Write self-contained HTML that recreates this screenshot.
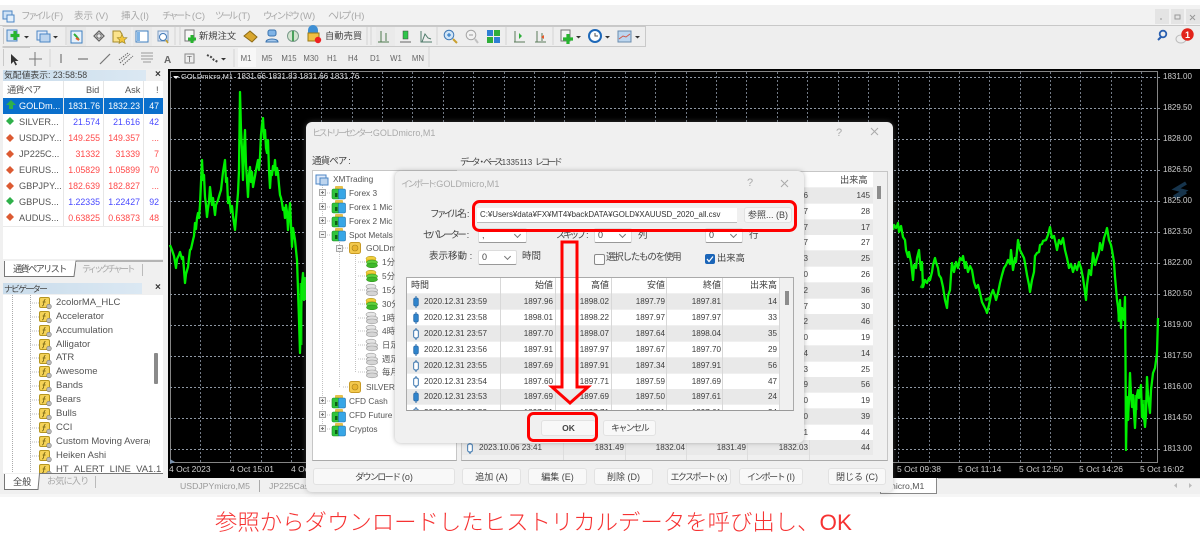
<!DOCTYPE html>
<html lang="ja"><head><meta charset="utf-8"><title>History Center</title>
<style>
html,body{margin:0;padding:0;background:#fff}
#root{position:relative;width:1200px;height:538px;overflow:hidden;background:#fff;font-family:"Liberation Sans","Noto Sans CJK JP",sans-serif;filter:blur(.35px);color:#444}
.a,.t,.btn,.cb{position:absolute}
.t{white-space:nowrap;line-height:12px;font-size:9px}
.k{letter-spacing:-.28em}.k1{letter-spacing:-.18em}
svg{position:absolute;left:0;top:0;overflow:visible}
.btn{background:#f8f8f8;border:1px solid #e2e2e2;border-radius:3px;box-sizing:border-box;text-align:center;font-size:9px;color:#444;line-height:16px;white-space:nowrap}
.cb{background:#fff;border:1px solid #dcdcdc;border-bottom:1px solid #999;box-sizing:border-box;font-size:9px;line-height:13px;padding-left:3px;border-radius:2px}
.cb:after{content:"";position:absolute;right:6px;top:3px;width:4px;height:4px;border-right:1px solid #777;border-bottom:1px solid #777;transform:rotate(45deg)}
.ax{left:1163px;font-size:8px;color:#cfcfcf}
.tm{top:463px;font-size:8.500px;color:#cfcfcf}
.mw{position:absolute;left:3px;width:160px;height:16px;border-bottom:1px solid #eaeaea;background:#fff;font-size:8.800px;line-height:16px}
.mw i{position:absolute;font-style:normal;top:0;text-align:right}
.mw i:nth-child(1){left:16px;color:#555;text-align:left;font-size:9.200px}
.mw i:nth-child(2){right:63px}.mw i:nth-child(3){right:23px}.mw i:nth-child(4){right:4px}
.bl i:nth-child(n+2){color:#4a4aff}.rd i:nth-child(n+2){color:#ff4a4a}
.sel{background:#0a6fcc!important}.sel i{color:#fff!important}
.nv{position:absolute;left:53px;font-size:9.500px;line-height:12px;white-space:nowrap;color:#555}
.row{position:absolute;height:15px;font-size:8.100px;line-height:15px;color:#3c3c3c}
.g{background:#e9e9e9}
.row span{position:absolute;top:0;white-space:nowrap}
#d2t .row{left:0;width:373px}
#d2t .row span:nth-child(1){left:17px}
#d2t .row span:nth-child(2){right:227px}#d2t .row span:nth-child(3){right:171px}#d2t .row span:nth-child(4){right:115px}#d2t .row span:nth-child(5){right:59px}#d2t .row span:nth-child(6){right:3px}
#d1t .row{left:0;width:411px}
#d1t .row span:nth-child(1){left:17px}
#d1t .row span:nth-child(2){right:249px}#d1t .row span:nth-child(3){right:188px}#d1t .row span:nth-child(4){right:127px}#d1t .row span:nth-child(5){right:65px}#d1t .row span:nth-child(6){right:3px}
.tr{font-size:8.300px;color:#555}
</style></head><body><div id="root">

<!-- window chrome -->
<div class="a" style="left:0;top:5px;width:1200px;height:20px;background:#f2f2f2"></div>
<div class="a" style="left:0;top:25px;width:1200px;height:44px;background:#eeeeee;border-top:1px solid #c8c8c8;box-sizing:border-box"></div>
<div class="a" style="left:1155px;top:9px;width:14px;height:15px;background:#e4e4e4"></div>
<div class="a" style="left:1171px;top:9px;width:13px;height:15px;background:#e4e4e4"></div>
<div class="a" style="left:1186px;top:9px;width:14px;height:15px;background:#e4e4e4"></div>
<div class="a" style="left:0;top:69px;width:168px;height:425px;background:#f0f0f0"></div>
<div class="a" style="left:168px;top:478px;width:1032px;height:16px;background:#f0f0f0"></div>
<div class="a" style="left:0;top:494px;width:1200px;height:3px;background:#f6f6f6"></div>

<div class="t" style="left:21px;top:11px;color:#a8a8a8;font-size:9.500px"><span class="k">ファイル</span> (F)</div>
<div class="t" style="left:74px;top:11px;color:#a8a8a8;font-size:9.500px">表示 (V)</div>
<div class="t" style="left:121px;top:11px;color:#a8a8a8;font-size:9.500px">挿入(I)</div>
<div class="t" style="left:162px;top:11px;color:#a8a8a8;font-size:9.500px"><span class="k">チャート</span> (C)</div>
<div class="t" style="left:215px;top:11px;color:#a8a8a8;font-size:9.500px"><span class="k">ツール</span> (T)</div>
<div class="t" style="left:263px;top:11px;color:#a8a8a8;font-size:9.500px"><span class="k">ウィンドウ</span> (W)</div>
<div class="t" style="left:328px;top:11px;color:#a8a8a8;font-size:9.500px"><span class="k">ヘルプ</span> (H)</div>

<!-- toolbars -->
<svg width="1200" height="70" viewBox="0 0 1200 70">
<defs>
<symbol id="fold" viewBox="0 0 14 13" overflow="visible"><rect x="3" y="0" width="8" height="4" rx="1" fill="#e6c04a"/><rect x="0" y="3" width="8" height="10" rx="1.5" fill="#2fc43c" stroke="#1a8a25" stroke-width=".6"/><rect x="6.5" y="3" width="7" height="10" rx="1.5" fill="#37a6e6" stroke="#1d6fa8" stroke-width=".6"/><rect x="3" y="7" width="2.5" height="4" fill="#0b5e14"/></symbol>
<symbol id="coin" viewBox="0 0 12 12" overflow="visible"><rect x=".5" y=".5" width="11" height="11" rx="2" fill="#f3c94e" stroke="#c89a24"/><circle cx="6" cy="6" r="3" fill="#e9b52f" stroke="#a8801a" stroke-width=".6"/></symbol>
<symbol id="dbg" viewBox="0 0 12 12" overflow="visible"><ellipse cx="5" cy="2.6" rx="5" ry="2.4" fill="#f2cf3a" stroke="#9c8a20" stroke-width=".5"/><rect y="3" width="10" height="3" fill="#e3bd2e"/><ellipse cx="6" cy="6.4" rx="5.6" ry="2.4" fill="#5fd13c" stroke="#2e8a1a" stroke-width=".5"/><ellipse cx="6" cy="9.4" rx="5.6" ry="2.4" fill="#3db82a" stroke="#2e8a1a" stroke-width=".5"/></symbol>
<symbol id="dbn" viewBox="0 0 12 12" overflow="visible"><ellipse cx="5" cy="2.6" rx="5" ry="2.4" fill="#e6e6e6" stroke="#9a9a9a" stroke-width=".6"/><ellipse cx="6" cy="6.4" rx="5.6" ry="2.4" fill="#dedede" stroke="#9a9a9a" stroke-width=".6"/><ellipse cx="6" cy="9.4" rx="5.6" ry="2.4" fill="#d5d5d5" stroke="#9a9a9a" stroke-width=".6"/></symbol>
<symbol id="cf" viewBox="0 0 6 12" overflow="visible"><path d="M3 0V12" stroke="#2a6aa8"/><rect x=".7" y="2" width="4.6" height="8" rx="1.6" fill="#2f84cc" stroke="#2a6aa8" stroke-width=".8"/></symbol>
<symbol id="ch" viewBox="0 0 6 12" overflow="visible"><path d="M3 0V12" stroke="#2a6aa8"/><rect x=".7" y="2" width="4.6" height="8" rx="1.6" fill="#fff" stroke="#2a6aa8" stroke-width=".9"/></symbol>
<symbol id="fx" viewBox="0 0 13 12" overflow="visible"><rect x=".5" y=".5" width="10" height="10" rx="1.5" fill="#f4d257" stroke="#b5951f"/><path d="M6.500 2.500C5 2.500 5 4 4.800 6S4.200 9 3 9M3.600 5H6.600" stroke="#6a5a10" fill="none" stroke-width=".8"/><circle cx="10" cy="9.500" r="2.300" fill="#bbb" stroke="#777" stroke-width=".6"/></symbol>
</defs>
<g fill="none" stroke="#c9c9c9">
<path d="M2.500 26.500H645.500V46.500H2.500M2.500 47.500H30M3.500 28V44M3.500 49V66"/>
<path d="M66 27V45M180 27V45M175 27V45M367 27V45M371 27V45M437 27V45M506 27V45M553 27V45M50 49V67M234 49V67M429 47V67" stroke="#d4d4d4"/>
</g>
<!-- menu logo -->
<rect x="3" y="11" width="9" height="8" fill="#cfe2f5" stroke="#4c86c4"/><rect x="7" y="15" width="7" height="7" fill="#e4f0fb" stroke="#4c86c4"/>
<!-- toolbar 1 icons -->
<rect x="7" y="30" width="10" height="11" fill="#cfe2f5" stroke="#4c86c4"/><path d="M15 31v9M10.500 35.500h9" stroke="#27b52f" stroke-width="3.200"/><path d="M24 36h5l-2.500 2.500z" fill="#333"/>
<rect x="37" y="31" width="10" height="9" fill="#dfeafa" stroke="#4c86c4"/><rect x="40" y="34" width="10" height="8" fill="#bcd4ee" stroke="#4c86c4"/><path d="M53 36h5l-2.500 2.500z" fill="#333"/>
<rect x="67" y="27" width="19" height="19" fill="#e2e2e2" opacity=".5"/><rect x="71" y="31" width="11" height="12" fill="#e8f2fb" stroke="#3e7fc0"/><path d="M74 34l3 3M77 37l2 3" stroke="#2fae3a" stroke-width="2"/><path d="M76 38l3 2" stroke="#e85a2a" stroke-width="2"/>
<path d="M99 31l5 5-5 5-5-5z" fill="none" stroke="#666" stroke-width="1.300"/><circle cx="99" cy="36" r="2.200" fill="none" stroke="#666"/>
<rect x="110" y="27" width="21" height="19" fill="#e4e4e4" opacity=".5"/><path d="M113 31h7l2 3v8h-9z" fill="#fbe38b" stroke="#a58a2c"/><path d="M122 34l1.500 3.500 3.500.3-2.700 2.300.9 3.400-3.200-1.900-3 1.900.8-3.400-2.600-2.300 3.500-.3z" fill="#f2c53a" stroke="#96801e" stroke-width=".6"/>
<rect x="133" y="27" width="19" height="19" fill="#e4e4e4" opacity=".5"/><rect x="136" y="31" width="12" height="11" fill="#fff" stroke="#3e7fc0"/><rect x="137" y="32" width="3" height="9" fill="#7fb4e6"/>
<rect x="158" y="31" width="10" height="10" fill="#dfeafa" stroke="#7c9cc0"/><circle cx="163" cy="37" r="3.500" fill="#fff" stroke="#3f78b5"/><path d="M166 40l2 3" stroke="#c5a032" stroke-width="1.600"/>
<rect x="185" y="30" width="9" height="11" fill="#f7f7f7" stroke="#777"/><path d="M192 35v8M188 39h8" stroke="#27b52f" stroke-width="3"/>
<text x="199" y="39" font-size="9.300" fill="#444">新規注文</text>
<path d="M244 36l6-5 7 6-5 5z" fill="#d9a72f" stroke="#8c6a14"/>
<rect x="268" y="30" width="8" height="6" rx="2" fill="#7fb3e6" stroke="#3a73ae"/><path d="M266 42c0-4 12-4 12 0z" fill="#a5c8ec" stroke="#3a73ae"/>
<circle cx="293" cy="36" r="5.500" fill="#d4e4d0" stroke="#7a9a8a"/><path d="M293 31v10" stroke="#49a05a" stroke-width="2"/>
<path d="M308 30a5 5 0 0 1 10 0v5h-10z" fill="#3e8fd4"/><path d="M308 33h11v8h-11z" fill="#f0c044" stroke="#9a7a14"/><circle cx="318" cy="40" r="3.200" fill="#e22"/>
<text x="325" y="39" font-size="9.300" fill="#444">自動売買</text>
<rect x="376" y="27" width="19" height="19" fill="#e4e4e4" opacity=".4"/>
<path d="M381 31v11M386 33v8M378 42h11" stroke="#4d7a4d" fill="none"/>
<rect x="403" y="31" width="5" height="8" fill="#2fc44a" stroke="#444" stroke-width=".5"/><path d="M400 42h11" stroke="#666"/>
<path d="M422 42l3-8 3 4 3 1M421 31v11h11" fill="none" stroke="#4f7a6a"/>
<circle cx="449" cy="35" r="4.800" fill="#cfe4f7" stroke="#3f78b5"/><path d="M447 35h4M449 33v4" stroke="#1e6fc2"/><path d="M453 39l4 4" stroke="#c9a030" stroke-width="2"/>
<circle cx="471" cy="35" r="4.800" fill="#f2f2f2" stroke="#a5a5a5"/><path d="M469 35h4" stroke="#999"/><path d="M475 39l3 4" stroke="#c2c2c2" stroke-width="2"/>
<rect x="487" y="30" width="6" height="6" fill="#2f7fd4"/><rect x="494" y="30" width="6" height="6" fill="#2fae3a"/><rect x="487" y="37" width="6" height="6" fill="#2fae3a"/><rect x="494" y="37" width="6" height="6" fill="#2f7fd4"/>
<path d="M515 31v11M514 42h11" stroke="#5a7a5a" fill="none"/><path d="M519 33l3 3-3 3z" fill="#2fae3a"/>
<path d="M537 31v11M535 42h11M542 33v8" stroke="#5a7a5a" fill="none"/><path d="M544 35l-3 2 3 2z" fill="#e85a2a"/>
<rect x="561" y="30" width="9" height="11" fill="#f3f3f3" stroke="#777"/><path d="M568 34v10M563 39h10" stroke="#27b52f" stroke-width="3.200"/><path d="M576 36h5l-2.500 2.500z" fill="#333"/>
<circle cx="595" cy="36" r="6" fill="#fff" stroke="#1e68b8" stroke-width="2"/><path d="M595 33v3h3" stroke="#555" fill="none"/><path d="M605 36h5l-2.500 2.500z" fill="#333"/>
<rect x="618" y="31" width="13" height="11" fill="#bcd6ef" stroke="#6a8cae"/><path d="M619 39l4-3 3 1 4-3" stroke="#d05a4a" fill="none"/><path d="M635 36h5l-2.500 2.500z" fill="#333"/>
<!-- right -->
<path d="M1160 19h2" stroke="#999"/><rect x="1175" y="15" width="5" height="4" fill="none" stroke="#999"/><path d="M1190 15l5 5m0-5l-5 5" stroke="#999"/>
<circle cx="1163" cy="34" r="3.300" fill="none" stroke="#2a5fb0" stroke-width="1.800"/><path d="M1161 37l-3 3" stroke="#2a5fb0" stroke-width="2"/>
<ellipse cx="1181" cy="39" rx="5" ry="4" fill="#eee" stroke="#bbb"/><circle cx="1187.500" cy="34.500" r="6.200" fill="#e2231a"/><text x="1187.500" y="38" font-size="9" font-weight="bold" fill="#fff" text-anchor="middle">1</text>
<!-- toolbar 2 -->
<path d="M11 54v10l2.500-2.500 2 4 1.500-1-2-3.500h3.500z" fill="#333"/>
<path d="M35 52v14M29 59h13" stroke="#777" fill="none"/>
<path d="M61 54v9" stroke="#777" stroke-width="1.200"/><path d="M78 59h10" stroke="#777" stroke-width="1.200"/><path d="M100 64l10-10" stroke="#777" stroke-width="1.200"/>
<path d="M120 63l10-9M123 65l10-9M119 60l9-7" stroke="#666" stroke-dasharray="1.500 1"/>
<path d="M141 53h12M141 56h12M141 59h12M143 62h8" stroke="#999"/>
<text x="164" y="63" font-size="10" font-weight="bold" fill="#666">A</text>
<rect x="185" y="54" width="9" height="9" fill="none" stroke="#888"/><text x="187" y="62" font-size="8" fill="#666">T</text>
<path d="M207 55l4 2 3 3 4 2" stroke="#444" stroke-width="2" stroke-dasharray="2 1.500" fill="none"/><path d="M221 58h5l-2.500 2.500z" fill="#333"/>
<rect x="238" y="48" width="18" height="19" fill="#f7f7f7"/>
<g font-size="7.800" fill="#666" text-anchor="middle"><text x="246" y="61">M1</text><text x="267" y="61">M5</text><text x="289" y="61">M15</text><text x="311" y="61">M30</text><text x="332" y="61">H1</text><text x="353" y="61">H4</text><text x="375" y="61">D1</text><text x="396" y="61">W1</text><text x="418" y="61">MN</text></g>
</svg>

<!-- chart -->
<div class="a" style="left:168px;top:69px;width:1032px;height:409px;background:#000"></div>
<svg width="1200" height="538" viewBox="0 0 1200 538">
<rect x="170.500" y="71.500" width="987" height="391" fill="none" stroke="#858585"/>
<path d="M170 77.500H1162M170 108.500H1162M170 139.500H1162M170 170.500H1162M170 201.500H1162M170 232.500H1162M170 263.500H1162M170 294.500H1162M170 325.500H1162M170 356.500H1162M170 387.500H1162M170 418.500H1162M170 449.500H1162" stroke="#8e97a3" stroke-dasharray="2 2" stroke-width=".9" fill="none"/>
<path d="M200.500 72V462M230.500 72V462M261.500 72V462M291.500 72V462M321.500 72V462M352.500 72V462M382.500 72V462M412.500 72V462M443.500 72V462M473.500 72V462M504.500 72V462M534.500 72V462M564.500 72V462M595.500 72V462M625.500 72V462M655.500 72V462M686.500 72V462M716.500 72V462M746.500 72V462M777.500 72V462M807.500 72V462M838.500 72V462M868.500 72V462M898.500 72V462M929.500 72V462M959.500 72V462M989.500 72V462M1020.500 72V462M1050.500 72V462M1080.500 72V462M1111.500 72V462M1141.500 72V462" stroke="#7e8895" stroke-dasharray="2 2" stroke-width=".9" fill="none"/>
<path d="M173 76h6l-3 3z" fill="#eee"/><path d="M170 459l5 3-5 2z" fill="#7a93b0"/>
<g fill="none" stroke="#00f000" stroke-linejoin="round" stroke-width="2.300">
<polyline points="170,245 172,250 174,256 176,268 177,259 179,255 180,252 182,259 183,257 185,283 186,274 188,267 189,258 190,250 191,249 193,240 194,236 195,223 196,229 197,218 198,213 199,218 200,205 202,160 203,180 204,175 205,197 206,205 207,217 208,208 209,202 210,187 212,205 213,198 215,215 216,205 218,200 220,193 221,190 223,172 225,160 226,182 227,178 228,203 229,197 231,212 232,206 233,216 235,230 236,218 237,205 238,193 239,170 240,92 241,130 242,150 243,180 244,150 245,130 246,165 247,180 248,197 249,175 250,167 251,182 252,172 253,187 255,176 256,170 258,160 259,170 260,157 261,135 262,125 263,118 264,138 265,130 266,148 267,153 268,140 269,170 270,188 271,172 272,175 273,166 274,170 275,160 276,175 277,168 278,173 279,185 280,195 281,198 282,203 283,210 284,208 285,218 286,205 287,212 288,230 289,215 290,203 291,225 292,247 293,228 295,240 297,260 298,290 299,320 300,353 301,320 302,285 303,273 304,300 305,278 306,300"/>
<polyline points="893,230 894,225 896,228 898,223 899,232 901,226 903,237 905,240 906,250 908,257 909,252 911,262 913,280 914,265 916,268 917,258 919,250 920,262 921,270 922,262 923,287 925,280 927,283 929,278 930,280 932,272 933,265 935,258 936,262 938,268 939,275 941,278 943,287 945,300 947,308 948,296 950,290 951,275 952,263 954,272 956,262 958,268 960,258 962,260 963,256 965,268 966,262 968,272 970,266 972,270 974,282 976,288 978,285 980,293 982,302 984,306 986,310 987,313 989,305 991,295 993,290 995,296 996,300 998,293 1000,283 1002,275 1004,268 1006,265 1008,260 1010,264 1011,250 1013,270 1015,258 1016,262 1018,240 1020,250 1022,254 1024,258 1025,263 1027,275 1029,285 1030,292 1032,280 1034,272 1035,256 1037,253 1039,252 1040,245 1042,244 1043,241 1046,240 1048,235 1050,227 1052,238 1054,236 1056,245 1057,250 1059,240 1061,244 1063,238 1065,250 1067,258 1069,268 1071,264 1073,272 1075,265 1077,270 1079,262 1081,268 1083,278 1084,285 1086,300 1087,285 1089,270 1091,275 1093,253 1095,265 1097,258 1099,252 1100,243 1102,250 1104,238 1106,232 1107,228 1109,240 1111,245 1112,250 1114,262 1115,277 1117,300 1118,307 1119,320 1120,300 1121,328 1122,308 1124,320 1125,297 1125.500,360 1126,450 1127,397 1128,420 1129,400 1130,373 1131,395 1132,407 1133,395 1135,428 1136,405 1137,395 1138,390 1139,398 1141,385 1142,417 1143,405 1145,427 1146,415 1147,377 1148,395 1150,413 1151,390 1153,373 1155,368 1157,353 1158,318"/>
</g>
<g fill="none" stroke="#00f000" stroke-width="3" opacity=".8"><path d="M301 283V345M304 285V300M921 288L925 280M985 300L990 298M1119 305V322M1128 400V420M1136 395V410M1144 400V420"/></g>
<!-- logo -->
<path d="M1186 183l-10 6 8 2-10 6M1186 192l-10 6" stroke="#16344c" stroke-width="3.500" fill="none"/>
</svg>
<div class="t" style="left:181px;top:71px;font-size:7.500px;color:#dcdcdc;white-space:pre">GOLDmicro,M1</div>
<div class="t" style="left:237px;top:71px;font-size:8px;color:#dcdcdc;white-space:pre">1831.66 1831.83 1831.66 1831.76</div>
<div class="t ax" style="top:71px">1831.00</div><div class="t ax" style="top:102px">1829.50</div><div class="t ax" style="top:133px">1828.00</div><div class="t ax" style="top:164px">1826.50</div><div class="t ax" style="top:195px">1825.00</div><div class="t ax" style="top:226px">1823.50</div><div class="t ax" style="top:257px">1822.00</div><div class="t ax" style="top:288px">1820.50</div><div class="t ax" style="top:319px">1819.00</div><div class="t ax" style="top:350px">1817.50</div><div class="t ax" style="top:381px">1816.00</div><div class="t ax" style="top:412px">1814.50</div><div class="t ax" style="top:443px">1813.00</div>
<div class="t tm" style="left:169px">4 Oct 2023</div><div class="t tm" style="left:230px">4 Oct 15:01</div><div class="t tm" style="left:291px">4 Oct</div>
<div class="t tm" style="left:897px">5 Oct 09:38</div><div class="t tm" style="left:958px">5 Oct 11:14</div><div class="t tm" style="left:1019px">5 Oct 12:50</div><div class="t tm" style="left:1079px">5 Oct 14:26</div><div class="t tm" style="left:1140px">5 Oct 16:02</div>

<!-- bottom tabs -->
<div class="t" style="left:180px;top:480px;color:#999;font-size:8.700px">USDJPYmicro,M5</div>
<div class="a" style="left:259px;top:480px;width:1px;height:12px;background:#aaa"></div>
<div class="t" style="left:269px;top:480px;color:#999;font-size:8.700px">JP225Cas</div>
<div class="a" style="left:880px;top:478px;width:57px;height:16px;background:#fff;border:1px solid #888;border-top:none;box-sizing:border-box"></div>
<div class="t" style="left:891px;top:480px;color:#555;font-size:8.700px">nicro,M1</div>
<div class="a" style="left:938px;top:478px;width:262px;height:1px;background:#bbb"></div>
<svg width="1200" height="538"><path d="M1177 483l-3 2.500 3 2.500zM1189 483l3 2.500-3 2.500z" fill="#bbb"/></svg>

<!-- left market watch -->
<div class="a" style="left:3px;top:70px;width:143px;height:11px;background:linear-gradient(90deg,#c9dceb,#dbe8f3)"></div>
<div class="t" style="left:4px;top:69px;font-size:8.800px;color:#444">気配値表示: 23:58:58</div>
<div class="t" style="left:155px;top:69px;font-size:10px;font-weight:bold;color:#333">×</div>
<div class="a" style="left:3px;top:81px;width:160px;height:178px;background:#fff"></div>
<div class="t" style="left:7px;top:84px;color:#555;font-size:9.200px;letter-spacing:-.8px">通貨ペア</div>
<div class="t" style="left:86px;top:84px;color:#555;font-size:9.200px">Bid</div>
<div class="t" style="left:125px;top:84px;color:#555;font-size:9.200px">Ask</div>
<div class="t" style="left:156px;top:84px;color:#555;font-size:9.200px">!</div>
<div class="mw sel" style="top:98px"><i>GOLDm...</i><i>1831.76</i><i>1832.23</i><i>47</i></div>
<div class="mw bl" style="top:114px"><i>SILVER...</i><i>21.574</i><i>21.616</i><i>42</i></div>
<div class="mw rd" style="top:130px"><i>USDJPY...</i><i>149.255</i><i>149.357</i><i>...</i></div>
<div class="mw rd" style="top:146px"><i>JP225C...</i><i>31332</i><i>31339</i><i>7</i></div>
<div class="mw rd" style="top:162px"><i>EURUS...</i><i>1.05829</i><i>1.05899</i><i>70</i></div>
<div class="mw rd" style="top:178px"><i>GBPJPY...</i><i>182.639</i><i>182.827</i><i>...</i></div>
<div class="mw bl" style="top:194px"><i>GBPUS...</i><i>1.22335</i><i>1.22427</i><i>92</i></div>
<div class="mw rd" style="top:210px"><i>AUDUS...</i><i>0.63825</i><i>0.63873</i><i>48</i></div>
<svg width="1200" height="538">
<path d="M63.500 81V226M103.500 81V226M143.500 81V226" stroke="#e6e6e6"/>
<g fill="#2fb04a"><path d="M11 100l5 5h-3v4h-4v-4h-3z"/><path d="M10 117l4 4-4 4-4-4z"/><path d="M10 197l4 4-4 4-4-4z"/></g>
<g fill="#dc5a32"><path d="M10 134l4 4-4 4-4-4z"/><path d="M10 150l4 4-4 4-4-4z"/><path d="M10 166l4 4-4 4-4-4z"/><path d="M10 182l4 4-4 4-4-4z"/><path d="M10 213l4 4-4 4-4-4z"/></g>
<path d="M4.500 261V276.500H74L76 261H163" fill="#fff" stroke="#777" /><rect x="76" y="262" width="87" height="15" fill="#f0f0f0"/>
<path d="M142.500 264V276" stroke="#bbb"/>
</svg>
<div class="t" style="left:13px;top:263px;color:#444;font-size:9.200px"><span class="k1">通貨ペアリスト</span></div>
<div class="t" style="left:82px;top:263px;color:#aaa;font-size:9.200px"><span style="letter-spacing:-.3em">ティックチャート</span></div>

<!-- navigator -->
<div class="a" style="left:3px;top:283px;width:139px;height:11px;background:linear-gradient(90deg,#c9dceb,#dbe8f3)"></div>
<div class="t" style="left:4px;top:283px;font-size:8.800px;color:#444;letter-spacing:-.2em">ナビゲーター</div>
<div class="t" style="left:155px;top:282px;font-size:10px;font-weight:bold;color:#333">×</div>
<div class="a" style="left:3px;top:295px;width:160px;height:178px;background:#fff;overflow:hidden" id="nav">
<div class="nv" style="top:2px">2colorMA_HLC</div><div class="nv" style="top:16px">Accelerator</div><div class="nv" style="top:30px">Accumulation</div><div class="nv" style="top:44px">Alligator</div><div class="nv" style="top:57px">ATR</div><div class="nv" style="top:71px">Awesome</div><div class="nv" style="top:85px">Bands</div><div class="nv" style="top:99px">Bears</div><div class="nv" style="top:113px">Bulls</div><div class="nv" style="top:127px">CCI</div><div class="nv" style="top:141px;width:94px;overflow:hidden">Custom Moving Average</div><div class="nv" style="top:155px">Heiken Ashi</div><div class="nv" style="top:169px">HT_ALERT_LINE_VA1.1</div>
<svg width="160" height="178">
<path d="M9.500 0V178M27.500 0V178" stroke="#aaa" stroke-dasharray="1 1"/>
<path d="M27 8h10M27 22h10M27 36h10M27 50h10M27 63h10M27 77h10M27 91h10M27 105h10M27 119h10M27 133h10M27 147h10M27 161h10" stroke="#bbb" stroke-dasharray="1 1"/>
<use href="#fx" x="36" y="2" width="13" height="12"/><use href="#fx" x="36" y="16" width="13" height="12"/><use href="#fx" x="36" y="30" width="13" height="12"/><use href="#fx" x="36" y="44" width="13" height="12"/><use href="#fx" x="36" y="58" width="13" height="12"/><use href="#fx" x="36" y="71" width="13" height="12"/><use href="#fx" x="36" y="85" width="13" height="12"/><use href="#fx" x="36" y="99" width="13" height="12"/><use href="#fx" x="36" y="113" width="13" height="12"/><use href="#fx" x="36" y="127" width="13" height="12"/><use href="#fx" x="36" y="141" width="13" height="12"/><use href="#fx" x="36" y="155" width="13" height="12"/><use href="#fx" x="36" y="169" width="13" height="12"/>
<rect x="151" y="58" width="4" height="31" rx="1" fill="#8a8a8a"/>
</svg></div>
<svg width="1200" height="538"><path d="M4.500 474V489.500H38L39.500 473.500H163" fill="#fff" stroke="#777"/><rect x="40" y="474" width="123" height="16" fill="#f0f0f0"/><path d="M95.500 476V488" stroke="#bbb"/></svg>
<div class="t" style="left:13px;top:476px;font-size:9.200px">全般</div>
<div class="t" style="left:47px;top:475px;font-size:9.200px;color:#aaa;letter-spacing:-.1em">お気に入り</div>

<!-- history center dialog -->
<div class="a" style="left:306px;top:122px;width:587px;height:370px;background:#f0f0f0;border-radius:6px;box-shadow:0 0 6px rgba(120,120,120,.45)"></div>
<div class="t" style="left:312px;top:127px;font-size:9px;color:#aaa"><span class="k">ヒストリーセンター:</span> GOLDmicro,M1</div>
<div class="t" style="left:836px;top:127px;font-size:11px;color:#aaa">?</div>
<svg width="1200" height="538"><path d="M871 128l7 7m0-7l-7 7" stroke="#aaa" fill="none"/></svg>
<div class="t" style="left:312px;top:156px;font-size:9.500px;letter-spacing:-.9px">通貨ペア :</div>
<div class="t" style="left:460px;top:156px;font-size:9px"><span style="letter-spacing:-.36em">データ・ベース:</span> <b style="font-weight:400;font-size:8px">1335113</b> <span style="letter-spacing:-.3em">レコード</span></div>

<div class="a" style="left:312px;top:170px;width:145px;height:291px;background:#fff;border:1px solid #c6c6c6;border-bottom:1.500px solid #aaa;box-sizing:border-box"></div>
<svg width="1200" height="538">
<path d="M322.500 185V430M339.500 240V388M355.500 253V373" stroke="#c2c2c2" stroke-dasharray="1 1" fill="none"/>
<path d="M325 193h6M325 207h6M325 221h6M325 235h6M325 401h6M325 415h6M325 429h6M343 248h6M343 387h6M358 262h8M358 276h8M358 290h8M358 304h8M358 318h8M358 331h8M358 345h8M358 359h8M358 372h8" stroke="#c2c2c2" stroke-dasharray="1 1" fill="none"/>
<g fill="#f2f2f2" stroke="#a8a8a8"><rect x="319.500" y="189.500" width="6" height="6"/><rect x="319.500" y="203.500" width="6" height="6"/><rect x="319.500" y="217.500" width="6" height="6"/><rect x="319.500" y="231.500" width="6" height="6"/><rect x="319.500" y="397.500" width="6" height="6"/><rect x="319.500" y="411.500" width="6" height="6"/><rect x="319.500" y="425.500" width="6" height="6"/><rect x="336.500" y="245.500" width="6" height="6"/></g>
<path d="M321 192.500h3M322.500 191v3M321 206.500h3M322.500 205v3M321 220.500h3M322.500 219v3M321 234.500h3M321 400.500h3M322.500 399v3M321 414.500h3M322.500 413v3M321 428.500h3M322.500 427v3M338 248.500h3" stroke="#777"/>
<rect x="316" y="175" width="10" height="9" fill="#dfeafa" stroke="#4c86c4"/><rect x="320" y="178" width="8" height="7" fill="#bcd4ee" stroke="#4c86c4"/>
<use href="#fold" x="332" y="186" width="14" height="13"/><use href="#fold" x="332" y="200" width="14" height="13"/><use href="#fold" x="332" y="214" width="14" height="13"/><use href="#fold" x="332" y="228" width="14" height="13"/><use href="#fold" x="332" y="395" width="14" height="13"/><use href="#fold" x="332" y="409" width="14" height="13"/><use href="#fold" x="332" y="423" width="14" height="13"/>
<use href="#coin" x="349" y="242" width="12" height="12"/><use href="#coin" x="349" y="381" width="12" height="12"/>
<use href="#dbg" x="366" y="256" width="12" height="12"/><use href="#dbg" x="366" y="270" width="12" height="12"/><use href="#dbn" x="366" y="284" width="12" height="12"/><use href="#dbg" x="366" y="298" width="12" height="12"/><use href="#dbn" x="366" y="312" width="12" height="12"/><use href="#dbn" x="366" y="325" width="12" height="12"/><use href="#dbn" x="366" y="339" width="12" height="12"/><use href="#dbn" x="366" y="353" width="12" height="12"/><use href="#dbn" x="366" y="366" width="12" height="12"/>
</svg>
<div class="t tr" style="left:333px;top:173px">XMTrading</div><div class="t tr" style="left:349px;top:187px">Forex 3</div><div class="t tr" style="left:349px;top:201px">Forex 1 Mic</div><div class="t tr" style="left:349px;top:215px">Forex 2 Mic</div><div class="t tr" style="left:349px;top:229px">Spot Metals</div><div class="t tr" style="left:366px;top:242px">GOLDmicro</div><div class="t tr" style="left:382px;top:256px">1分足</div><div class="t tr" style="left:382px;top:270px">5分足</div><div class="t tr" style="left:382px;top:284px">15分足</div><div class="t tr" style="left:382px;top:298px">30分足</div><div class="t tr" style="left:382px;top:312px">1時間足</div><div class="t tr" style="left:382px;top:325px">4時間足</div><div class="t tr" style="left:382px;top:339px">日足</div><div class="t tr" style="left:382px;top:353px">週足</div><div class="t tr" style="left:382px;top:366px">毎月</div><div class="t tr" style="left:366px;top:381px">SILVERmicro</div><div class="t tr" style="left:349px;top:395px">CFD Cash</div><div class="t tr" style="left:349px;top:409px">CFD Future</div><div class="t tr" style="left:349px;top:423px">Cryptos</div>

<div class="a" id="d1t" style="left:461px;top:171px;width:427px;height:290px;background:#f0f0f0;border:1px solid #c6c6c6;border-bottom:1.500px solid #aaa;box-sizing:border-box;overflow:hidden">
<div class="a" style="left:0;top:0;width:411px;height:15px;background:#fff"></div>
<div class="t" style="left:378px;top:2px;font-size:9.200px;color:#444">出来高</div>
<div class="row g" style="top:16px"><span></span><span></span><span></span><span></span><span>1831.76</span><span>145</span></div>
<div class="row" style="top:32px;background:#fff"><span></span><span></span><span></span><span></span><span>1831.67</span><span>28</span></div>
<div class="row g" style="top:48px"><span></span><span></span><span></span><span></span><span>1831.77</span><span>17</span></div>
<div class="row" style="top:63px;background:#fff"><span></span><span></span><span></span><span></span><span>1831.67</span><span>27</span></div>
<div class="row g" style="top:79px"><span></span><span></span><span></span><span></span><span>1831.73</span><span>25</span></div>
<div class="row" style="top:95px;background:#fff"><span></span><span></span><span></span><span></span><span>1831.70</span><span>26</span></div>
<div class="row g" style="top:111px"><span></span><span></span><span></span><span></span><span>1831.72</span><span>36</span></div>
<div class="row" style="top:127px;background:#fff"><span></span><span></span><span></span><span></span><span>1831.77</span><span>30</span></div>
<div class="row g" style="top:142px"><span></span><span></span><span></span><span></span><span>1831.72</span><span>46</span></div>
<div class="row" style="top:158px;background:#fff"><span></span><span></span><span></span><span></span><span>1831.60</span><span>19</span></div>
<div class="row g" style="top:174px"><span></span><span></span><span></span><span></span><span>1831.64</span><span>14</span></div>
<div class="row" style="top:190px;background:#fff"><span></span><span></span><span></span><span></span><span>1831.63</span><span>25</span></div>
<div class="row g" style="top:205px"><span></span><span></span><span></span><span></span><span>1831.69</span><span>56</span></div>
<div class="row" style="top:221px;background:#fff"><span></span><span></span><span></span><span></span><span>1831.60</span><span>19</span></div>
<div class="row g" style="top:237px"><span></span><span></span><span></span><span></span><span>1831.50</span><span>39</span></div>
<div class="row" style="top:253px;background:#fff"><span></span><span></span><span></span><span></span><span>1831.51</span><span>44</span></div>
<div class="row g" style="top:268px"><span>2023.10.06 23:41</span><span>1831.49</span><span>1832.04</span><span>1831.49</span><span>1832.03</span><span>44</span></div>
<svg width="427" height="290"><rect x="415" y="14" width="4" height="13" fill="#8c8c8c"/><path d="M101.500 268V290M163.500 268V290M224.500 268V290M285.500 268V290M347.500 268V290" stroke="#ddd"/><use href="#ch" x="5" y="270" width="6" height="12"/></svg>
</div>

<div class="btn" style="left:313px;top:468px;width:142px;height:17px"><span class="k1">ダウンロード</span> (o)</div>
<div class="btn" style="left:462px;top:468px;width:59px;height:17px">追加 (A)</div>
<div class="btn" style="left:528px;top:468px;width:59px;height:17px">編集 (E)</div>
<div class="btn" style="left:594px;top:468px;width:59px;height:17px">削除 (D)</div>
<div class="btn" style="left:667px;top:468px;width:64px;height:17px"><span class="k1">エクスポート</span> (x)</div>
<div class="btn" style="left:739px;top:468px;width:64px;height:17px"><span class="k1">インポート</span> (I)</div>
<div class="btn" style="left:828px;top:468px;width:58px;height:17px">閉じる (C)</div>

<!-- import dialog -->
<div class="a" style="left:395px;top:171px;width:409px;height:272px;background:#f0f0f0;border-radius:6px;box-shadow:0 0 5px rgba(110,110,110,.5)"></div>
<div class="t" style="left:401px;top:178px;font-size:9.100px;color:#aaa"><span class="k">インポート:</span> GOLDmicro,M1</div>
<div class="t" style="left:747px;top:177px;font-size:11px;color:#aaa">?</div>
<svg width="1200" height="538"><path d="M781 180l7 7m0-7l-7 7" stroke="#aaa" fill="none"/></svg>
<div class="t" style="left:430px;top:209px;font-size:9.500px"><span class="k">ファイル名</span> :</div>
<div class="a" style="left:477px;top:208px;width:260px;height:14px;background:#fff;border-bottom:1px solid #bbb"></div>
<div class="t" style="left:480px;top:209px;font-size:7.900px;color:#333">C:¥Users¥data¥FX¥MT4¥backDATA¥GOLD¥XAUUSD_2020_all.csv</div>
<div class="btn" style="left:744px;top:207px;width:48px;height:16px;line-height:14px">参照... (B)</div>

<div class="t" style="left:423px;top:230px;font-size:9.500px"><span class="k">セパレーター</span> :</div>
<div class="cb" style="left:478px;top:228px;width:49px;height:15px">,</div>
<div class="t" style="left:556px;top:230px;font-size:9.500px"><span class="k">スキップ</span> :</div>
<div class="cb" style="left:594px;top:228px;width:38px;height:15px">0</div>
<div class="t" style="left:638px;top:230px;font-size:9.500px">列</div>
<div class="cb" style="left:705px;top:228px;width:38px;height:15px">0</div>
<div class="t" style="left:749px;top:230px;font-size:9.500px">行</div>
<div class="t" style="left:429px;top:251px;font-size:9.500px">表示移動 :</div>
<div class="cb" style="left:478px;top:250px;width:39px;height:15px">0</div>
<div class="t" style="left:522px;top:251px;font-size:9.500px">時間</div>
<div class="a" style="left:594px;top:254px;width:9px;height:9px;border:1px solid #888;border-radius:2px;background:#fbfbfb"></div>
<div class="t" style="left:606px;top:252px;font-size:9.500px;letter-spacing:-.13em">選択したものを使用</div>
<div class="a" style="left:705px;top:254px;width:10px;height:10px;background:#1b65b8;border-radius:2px"></div>
<svg width="1200" height="538"><path d="M707 259l2 2.500 4-5" stroke="#fff" stroke-width="1.200" fill="none"/></svg>
<div class="t" style="left:717px;top:252px;font-size:9.300px">出来高</div>

<div class="a" id="d2t" style="left:406px;top:277px;width:388px;height:134px;background:#f0f0f0;border:1px solid #aaa;border-bottom:1.500px solid #999;box-sizing:border-box;overflow:hidden">
<div class="a" style="left:0;top:0;width:373px;height:15px;background:#fff"></div>
<div class="row" style="top:0"><span style="left:4px!important;font-size:9px">時間</span><span style="font-size:9px">始値</span><span style="font-size:9px">高値</span><span style="font-size:9px">安値</span><span style="font-size:9px">終値</span><span style="font-size:9px">出来高</span></div>
<div class="row g" style="top:16px"><span>2020.12.31 23:59</span><span>1897.96</span><span>1898.02</span><span>1897.79</span><span>1897.81</span><span>14</span></div>
<div class="row" style="top:32px;background:#fff"><span>2020.12.31 23:58</span><span>1898.01</span><span>1898.22</span><span>1897.97</span><span>1897.97</span><span>33</span></div>
<div class="row g" style="top:48px"><span>2020.12.31 23:57</span><span>1897.70</span><span>1898.07</span><span>1897.64</span><span>1898.04</span><span>35</span></div>
<div class="row" style="top:64px;background:#fff"><span>2020.12.31 23:56</span><span>1897.91</span><span>1897.97</span><span>1897.67</span><span>1897.70</span><span>29</span></div>
<div class="row g" style="top:80px"><span>2020.12.31 23:55</span><span>1897.69</span><span>1897.91</span><span>1897.34</span><span>1897.91</span><span>56</span></div>
<div class="row" style="top:96px;background:#fff"><span>2020.12.31 23:54</span><span>1897.60</span><span>1897.71</span><span>1897.59</span><span>1897.69</span><span>47</span></div>
<div class="row g" style="top:111px"><span>2020.12.31 23:53</span><span>1897.69</span><span>1897.69</span><span>1897.50</span><span>1897.61</span><span>24</span></div>
<div class="row" style="top:127px;background:#fff"><span>2020.12.31 23:52</span><span>1897.51</span><span>1897.71</span><span>1897.51</span><span>1897.61</span><span>34</span></div>
<svg width="388" height="134">
<path d="M93.500 0V134M148.500 0V134M204.500 0V134M259.500 0V134M315.500 0V134M372.500 0V134" stroke="#d8d8d8"/>
<use href="#cf" x="6" y="18" width="6" height="12"/><use href="#cf" x="6" y="34" width="6" height="12"/><use href="#ch" x="6" y="50" width="6" height="12"/><use href="#cf" x="6" y="66" width="6" height="12"/><use href="#ch" x="6" y="82" width="6" height="12"/><use href="#ch" x="6" y="98" width="6" height="12"/><use href="#cf" x="6" y="113" width="6" height="12"/><use href="#ch" x="6" y="129" width="6" height="12"/>
<rect x="378" y="13" width="4" height="14" fill="#8c8c8c"/>
</svg>
</div>

<div class="btn" style="left:541px;top:420px;width:55px;height:16px;line-height:14px;font-weight:bold;font-size:8.500px">OK</div>
<div class="btn" style="left:603px;top:420px;width:53px;height:16px;line-height:14px"><span class="k1">キャンセル</span></div>

<!-- red annotations -->
<svg width="1200" height="538">
<rect x="473.500" y="201.500" width="322" height="29" rx="6" fill="none" stroke="#f00" stroke-width="3"/>
<rect x="528.500" y="413.500" width="68" height="27" rx="5" fill="none" stroke="#f00" stroke-width="3"/>
<path d="M562 242H577V387H588L570 403L552 387H562Z" fill="none" stroke="#f00" stroke-width="3" stroke-linejoin="miter"/>
</svg>

<div class="t" style="left:215px;top:508px;line-height:30px;font-size:22.400px;color:#f63232;font-weight:300">参照からダウンロードしたヒストリカルデータを呼び出し、OK</div>
</div></body></html>
